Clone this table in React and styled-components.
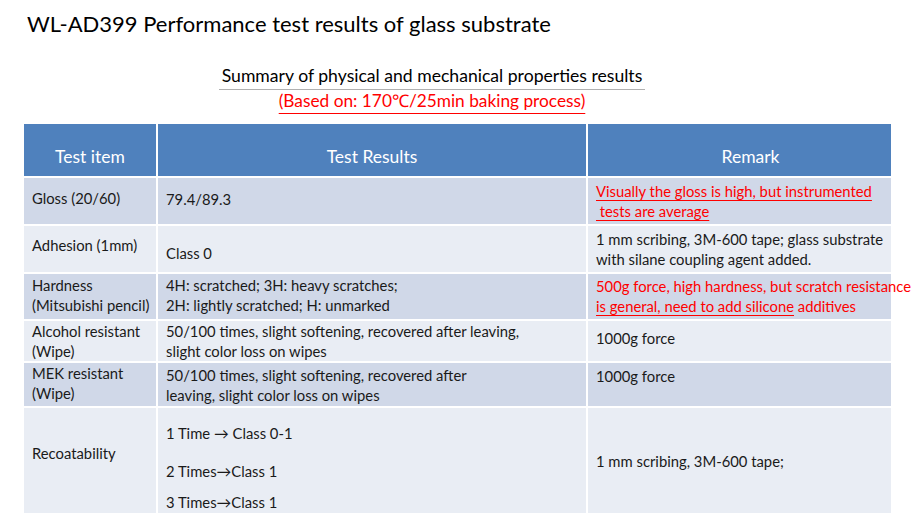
import React from "react";
import styled, { createGlobalStyle } from "styled-components";

const Global = createGlobalStyle`
  html, body { margin: 0; padding: 0; background: #fff; }
  body { font-family: Lato, "Open Sans", sans-serif; color: #1a1a1a; }
`;

const Page = styled.div`
  width: 920px;
  height: 528px;
  overflow: hidden;
  display: flex;
  flex-direction: column;
  background: #fff;
`;

const Title = styled.h1`
  margin: 0;
  padding: 10px 0 0 27px;
  font-size: 22px;
  line-height: 28px;
  font-weight: 400;
  color: #000;
`;

const SubBlock = styled.div`
  display: flex;
  flex-direction: column;
  align-items: center;
  padding: 28px 56px 0 0;
`;

const SubTitle = styled.div`
  font-size: 17.6px;
  line-height: 20px;
  color: #000;
  padding: 0 3px 3px;
  border-bottom: 1px solid #b0b0b0;
`;

const RedNote = styled.div`
  font-size: 17.3px;
  line-height: 22px;
  color: #ff0000;
  text-decoration: underline;
  text-decoration-thickness: 1px;
  text-underline-offset: 6px;
`;

const Table = styled.div`
  margin: 12px 0 0 24px;
  width: 867px;
  display: grid;
  grid-template-columns: 132px 428px 303px;
  grid-template-rows: 52px 46px 46px 45px 40px 43px 105px;
  gap: 2px;
  background: #fff;
`;

const Head = styled.div`
  background: #4f81bd;
  color: #fff;
  font-size: 17.5px;
  display: flex;
  justify-content: center;
  align-items: flex-start;
  padding-top: ${(p) => p.$pt}px;
  padding-left: ${(p) => p.$pl || 0}px;
  line-height: 20px;
  box-sizing: border-box;
`;

const Cell = styled.div`
  background: ${(p) => (p.$dark ? "#d0d8e8" : "#e9edf4")};
  font-size: 14.8px;
  line-height: 20px;
  color: #1a1a1a;
  padding: ${(p) => p.$pt}px 4px 0 ${(p) => p.$pl ?? 8}px;
  box-sizing: border-box;
  display: flex;
  flex-direction: column;
  white-space: nowrap;
  position: relative;
  z-index: ${(p) => (p.$over ? 1 : 0)};
`;

const Line = styled.div`
  margin-top: ${(p) => p.$mt || 0}px;
`;

const Red = styled.span`
  color: #ff0000;
  text-decoration: ${(p) => (p.$u ? "underline" : "none")};
  text-decoration-thickness: 1px;
  text-underline-offset: 3px;
`;

export default function App() {
  return (
    <Page>
      <Global />
      <Title>WL-AD399 Performance test results of glass substrate</Title>
      <SubBlock>
        <SubTitle>Summary of physical and mechanical properties results</SubTitle>
        <RedNote>(Based on: 170℃/25min baking process)</RedNote>
      </SubBlock>
      <Table>
        <Head $pt={23}>Test item</Head>
        <Head $pt={23}>Test Results</Head>
        <Head $pt={23} $pl={22}>Remark</Head>

        <Cell $dark $pt={10}>Gloss (20/60)</Cell>
        <Cell $dark $pt={11}>79.4/89.3</Cell>
        <Cell $dark $pt={3}>
          <Line><Red $u>Visually the gloss is high, but instrumented</Red></Line>
          <Line><Red $u>&nbsp;tests are average</Red></Line>
        </Cell>

        <Cell $pt={9}>Adhesion (1mm)</Cell>
        <Cell $pt={17}>Class 0</Cell>
        <Cell $pt={3}>
          <Line>1 mm scribing, 3M-600 tape; glass substrate</Line>
          <Line>with silane coupling agent added.</Line>
        </Cell>

        <Cell $dark $pt={1}>
          <Line>Hardness</Line>
          <Line>(Mitsubishi pencil)</Line>
        </Cell>
        <Cell $dark $pt={1}>
          <Line>4H: scratched; 3H: heavy scratches;</Line>
          <Line>2H: lightly scratched; H: unmarked</Line>
        </Cell>
        <Cell $dark $pt={2} $over>
          <Line><Red>500g force, high hardness, but scratch resistance</Red></Line>
          <Line><Red $u>is general, need to add silicone</Red><Red> additives</Red></Line>
        </Cell>

        <Cell $pt={0}>
          <Line>Alcohol resistant</Line>
          <Line>(Wipe)</Line>
        </Cell>
        <Cell $pt={0}>
          <Line>50/100 times, slight softening, recovered after leaving,</Line>
          <Line>slight color loss on wipes</Line>
        </Cell>
        <Cell $pt={7}>1000g force</Cell>

        <Cell $dark $pt={0}>
          <Line>MEK resistant</Line>
          <Line>(Wipe)</Line>
        </Cell>
        <Cell $dark $pt={2}>
          <Line>50/100 times, slight softening, recovered after</Line>
          <Line>leaving, slight color loss on wipes</Line>
        </Cell>
        <Cell $dark $pt={3}>1000g force</Cell>

        <Cell $pt={35}>Recoatability</Cell>
        <Cell $pt={15}>
          <Line>1 Time → Class 0-1</Line>
          <Line $mt={18}>2 Times→Class 1</Line>
          <Line $mt={11}>3 Times→Class 1</Line>
        </Cell>
        <Cell $pt={43}>1 mm scribing, 3M-600 tape;</Cell>
      </Table>
    </Page>
  );
}
